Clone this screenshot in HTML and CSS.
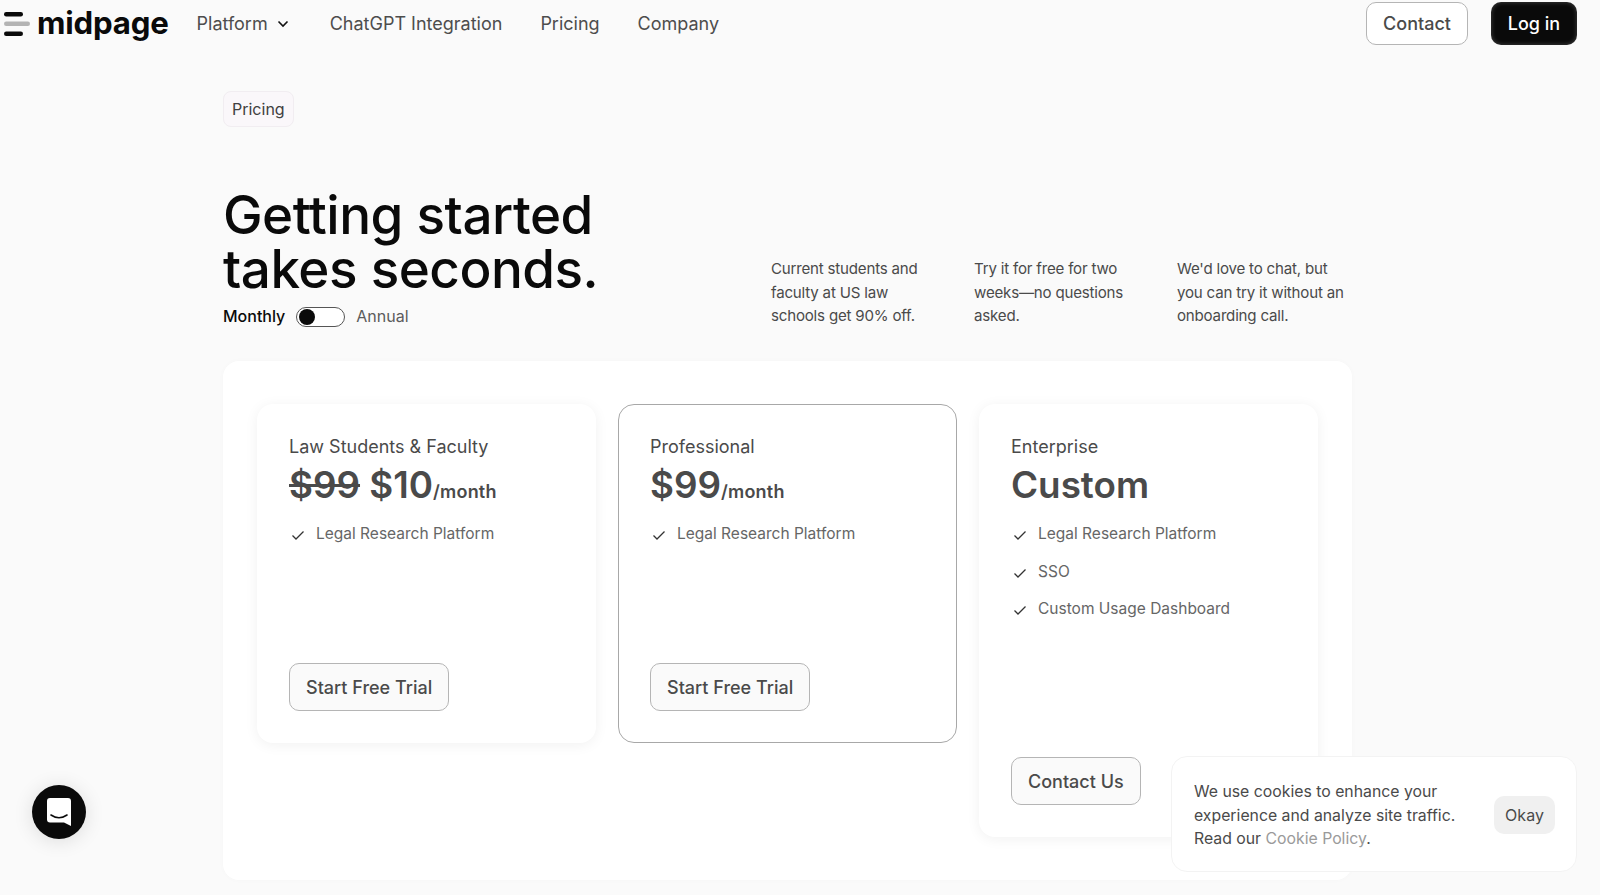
FILE: index.html
```html
<!DOCTYPE html>
<html>
    <head>
        <title>midpage - Pricing</title>
        <meta charset="utf-8">
        <meta name="viewport" content="width=device-width, initial-scale=1.0">
        <link rel="stylesheet" href="styles.css">
    </head>
    <body>
        <header class="nav">
            <a class="logo" href="#">
                <svg class="logo-icon" width="26" height="24" viewBox="0 0 26 24">
                    <rect x="0" y="0" width="19" height="4.5" rx="2.2" fill="#0a0a0a"/>
                    <rect x="0" y="9.5" width="26" height="4.5" rx="2.2" fill="#b4b4b4"/>
                    <rect x="0" y="19.5" width="19" height="4.5" rx="2.2" fill="#0a0a0a"/>
                </svg>
                <span class="logo-text">midpage</span>
            </a>
            <nav class="nav-links">
                <a href="#" class="nav-platform">Platform
                    <svg width="12" height="8" viewBox="0 0 12 8"><path d="M1.5 1.5 6 6l4.5-4.5" fill="none" stroke="#111" stroke-width="1.6"/></svg>
                </a>
                <a href="#">ChatGPT Integration</a>
                <a href="#">Pricing</a>
                <a href="#">Company</a>
            </nav>
            <div class="nav-actions">
                <a href="#" class="btn btn-contact">Contact</a>
                <a href="#" class="btn btn-login">Log in</a>
            </div>
        </header>

        <main class="page">
            <span class="badge">Pricing</span>

            <section class="intro">
                <div class="intro-left">
                    <h1>Getting started<br>takes seconds.</h1>
                    <div class="billing">
                        <span class="billing-on">Monthly</span>
                        <span class="toggle"><span class="toggle-dot"></span></span>
                        <span class="billing-off">Annual</span>
                    </div>
                </div>
                <div class="notes">
                    <p>Current students and faculty at US law schools get 90% off.</p>
                    <p>Try it for free for two weeks—no questions asked.</p>
                    <p>We'd love to chat, but you can try it without an onboarding call.</p>
                </div>
            </section>

            <section class="panel">
                <div class="card">
                    <div class="plan">Law Students &amp; Faculty</div>
                    <div class="price"><s>$99</s> $10<small>/month</small></div>
                    <ul class="features">
                        <li><svg class="check" viewBox="0 0 16 16"><path d="M2.5 8.5 6 12l7.5-7.5"/></svg>Legal Research Platform</li>
                    </ul>
                    <a href="#" class="btn btn-card">Start Free Trial</a>
                </div>
                <div class="card card-featured">
                    <div class="plan">Professional</div>
                    <div class="price">$99<small>/month</small></div>
                    <ul class="features">
                        <li><svg class="check" viewBox="0 0 16 16"><path d="M2.5 8.5 6 12l7.5-7.5"/></svg>Legal Research Platform</li>
                    </ul>
                    <a href="#" class="btn btn-card">Start Free Trial</a>
                </div>
                <div class="card card-tall">
                    <div class="plan">Enterprise</div>
                    <div class="price">Custom</div>
                    <ul class="features">
                        <li><svg class="check" viewBox="0 0 16 16"><path d="M2.5 8.5 6 12l7.5-7.5"/></svg>Legal Research Platform</li>
                        <li><svg class="check" viewBox="0 0 16 16"><path d="M2.5 8.5 6 12l7.5-7.5"/></svg>SSO</li>
                        <li><svg class="check" viewBox="0 0 16 16"><path d="M2.5 8.5 6 12l7.5-7.5"/></svg>Custom Usage Dashboard</li>
                    </ul>
                    <a href="#" class="btn btn-card">Contact Us</a>
                </div>
            </section>
        </main>

        <button class="chat">
            <svg width="24" height="28" viewBox="0 0 24 28">
                <path d="M3 0h18a3 3 0 0 1 3 3v25l-7-3.5H3a3 3 0 0 1-3-3V3a3 3 0 0 1 3-3z" fill="#fff"/>
                <path d="M4 17c5 3.4 11 3.4 16 0" fill="none" stroke="#0a0a0a" stroke-width="1.6" stroke-linecap="round"/>
            </svg>
        </button>

        <div class="cookie">
            <p>We use cookies to enhance your experience and analyze site traffic. Read our <a href="#">Cookie Policy</a>.</p>
            <button class="okay">Okay</button>
        </div>
    </body>
</html>
```

FILE: styles.css
```css
*{box-sizing: border-box;}
html,body{height: 100%;}
body{
      margin: 0;
      font-family: Inter, "Liberation Sans", sans-serif;
      background: #fafafa;
      color: #0a0a0a;
      overflow: hidden;
}
a{text-decoration: none; color: inherit;}

.nav{
      display: flex;
      align-items: center;
      height: 47px;
      padding: 0 23px 0 4px;
}
.logo{display: flex; align-items: center; gap: 7px;}
.logo-icon{display: block;}
.logo-text{font-size: 31.2px; font-weight: 700; letter-spacing: -0.2px; line-height: 47px;}
.nav-links{
      display: flex;
      align-items: center;
      gap: 38px;
      margin-left: 28px;
      font-size: 18px;
      color: #4d4d4d;
}
.nav-platform{display: flex; align-items: center; gap: 9px; margin-right: 3px;}
.nav-actions{display: flex; gap: 23px; margin-left: auto;}
.btn{display: inline-flex; align-items: center; justify-content: center; border-radius: 10px;}
.btn-contact{
      width: 102px;
      height: 43px;
      border: 1px solid #b5b5b5;
      background: #fff;
      color: #4a4a4a;
      font-size: 18px;
      font-weight: 500;
}
.btn-login{
      width: 86px;
      height: 43px;
      background: #0a0a0a;
      box-shadow: inset 0 0 5px rgba(255,255,255,0.25);
      color: #fff;
      font-size: 18px;
      font-weight: 500;
}

.page{width: 1129px; margin-left: 223px;}
.badge{
      display: inline-block;
      margin-top: 44px;
      height: 36px;
      padding: 0 8px;
      line-height: 34px;
      font-size: 16px;
      color: #404040;
      background: #faf7fa;
      border: 1px solid #f1edf1;
      border-radius: 8px;
}

.intro{display: flex; justify-content: space-between; align-items: flex-end; margin-top: 61px;}
h1{
      margin: 0;
      font-size: 53px;
      font-weight: 500;
      line-height: 54px;
      letter-spacing: -0.5px;
}
.billing{display: flex; align-items: center; margin-top: 6px; height: 28px; font-size: 16px;}
.billing-on{font-weight: 500;}
.billing-off{color: #5c5c5c;}
.toggle{
      display: flex;
      align-items: center;
      width: 49px;
      height: 20px;
      margin: 2px 11px 0;
      padding-left: 2px;
      border: 1px solid #555;
      border-radius: 10px;
      background: #fff;
}
.toggle-dot{width: 16px; height: 16px; border-radius: 50%; background: #0a0a0a;}
.notes{display: flex; gap: 33px; padding-right: 5px; margin-bottom: 2px;}
.notes p{
      width: 170px;
      margin: 0;
      font-size: 15.1px;
      line-height: 23.7px;
      letter-spacing: -0.2px;
      color: #4a4a4a;
}

.panel{
      display: flex;
      align-items: flex-start;
      gap: 22px;
      height: 519px;
      margin-top: 31px;
      padding: 43px 34px;
      background: #fff;
      border-radius: 16px;
      box-shadow: 0 0 6px rgba(0,0,0,0.02);
}
.card{
      display: flex;
      flex-direction: column;
      width: 339px;
      height: 339px;
      padding: 29px 31px 31px;
      background: #fff;
      border: 1px solid transparent;
      border-radius: 16px;
      box-shadow: 0 2px 14px rgba(0,0,0,0.06);
}
.card-featured{border-color: #a8a8a8; box-shadow: none;}
.card-tall{height: 433px;}
.plan{font-size: 18px; line-height: 26px; color: #4a4a4a;}
.price{
      margin-top: 1px;
      font-size: 36.8px;
      font-weight: 600;
      line-height: 48px;
      color: #4a4a4a;
}
.price small{font-size: 18px; font-weight: 600; line-height: 1; letter-spacing: 0.2px;}
.features{list-style: none; margin: 5.5px 0 0; padding: 0; flex: 1;}
.features li{
      display: flex;
      align-items: center;
      height: 37.7px;
      font-size: 15.5px;
      color: #666;
}
.check{
      width: 16px;
      height: 16px;
      margin: 3px 10px 0 1px;
      fill: none;
      stroke: #333;
      stroke-width: 1.3;
}
.btn-card{
      align-self: flex-start;
      height: 48px;
      padding: 0 16px;
      border: 1px solid #b5b5b5;
      background: #fafafa;
      color: #4a4a4a;
      font-size: 18px;
      font-weight: 500;
}

.chat{
      position: fixed;
      left: 32px;
      bottom: 56px;
      display: flex;
      align-items: center;
      justify-content: center;
      width: 54px;
      height: 54px;
      padding: 0;
      border: 0;
      border-radius: 50%;
      background: #0a0a0a;
      box-shadow: 0 2px 20px rgba(0,0,0,0.12);
}
.chat svg{display: block;}

.cookie{
      position: fixed;
      left: 1171px;
      top: 756px;
      display: flex;
      align-items: center;
      justify-content: space-between;
      width: 406px;
      height: 116px;
      padding: 1px 21px 0 22px;
      background: #fff;
      border: 1px solid #f3f3f3;
      border-radius: 16px;
}
.cookie p{
      width: 270px;
      margin: 2px 0 0;
      font-size: 15.8px;
      line-height: 23.7px;
      color: #4a4a4a;
}
.cookie p a{color: #9a9a9a;}
.okay{
      width: 61px;
      height: 38px;
      border: 0;
      border-radius: 10px;
      background: #f0f0f0;
      color: #4a4a4a;
      font-family: inherit;
      font-size: 16px;
}
```
